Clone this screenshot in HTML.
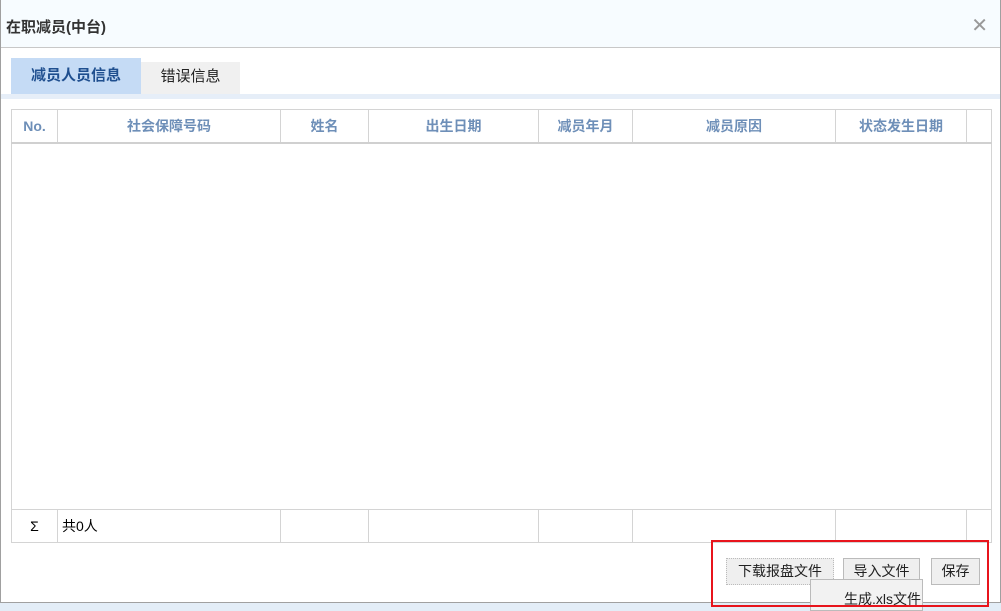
<!DOCTYPE html>
<html><head><meta charset="utf-8"><style>
*{margin:0;padding:0;box-sizing:border-box}
body{width:1001px;height:611px;background:#e3edf7;font-family:"Liberation Sans","Noto Sans CJK SC",sans-serif;position:relative;overflow:hidden}
.win{position:absolute;left:0;top:0;width:1001px;height:603px;background:#fff;border:1px solid #a0a0a0}
.hd{position:absolute;left:0;top:-1px;width:999px;height:48px;background:#f7fcff;border-bottom:1px solid #c8c8c8}
.hd b{position:absolute;left:5px;top:16px;font-size:15px;color:#333}
.x{position:absolute;right:12px;top:13px;font-size:20px;color:#999}
.tab{position:absolute;top:57px;height:36px;font-size:15px;line-height:36px;text-align:center}
.strip{position:absolute;left:0;top:93px;width:999px;height:5px;background:#e6eef8}
table{position:absolute;left:10px;top:108px;width:980px;border-collapse:collapse;table-layout:fixed}
td{border:1px solid #d4d4d4;font-size:14px}
.h td{height:33px;color:#6e8fb8;font-weight:bold;text-align:center;border-bottom:2px solid #d0d0d0}
.btn{position:absolute;top:557px;height:27px;background:#efefef;border:1px solid #bbb;font-size:14px;line-height:25px;text-align:center;color:#222}
</style></head><body>
<div class="win">
<div class="hd"><b>在职减员(中台)</b><span class="x">✕</span></div>
<div class="tab" style="left:10px;width:130px;background:#c5dbf5;color:#1f4f8f;font-weight:bold">减员人员信息</div>
<div class="tab" style="left:140px;width:99px;background:#f0f0f0;color:#222;top:61px;height:32px;line-height:30px">错误信息</div>
<div class="strip"></div>
<table>
<colgroup><col style="width:46px"><col style="width:223px"><col style="width:88px"><col style="width:170px"><col style="width:94px"><col style="width:203px"><col style="width:131px"><col style="width:25px"></colgroup>
<tr class="h"><td>No.</td><td>社会保障号码</td><td>姓名</td><td>出生日期</td><td>减员年月</td><td>减员原因</td><td>状态发生日期</td><td></td></tr>
<tr><td colspan="8" style="height:367px;border-top:none"></td></tr>
<tr><td style="height:33px;text-align:center">Σ</td><td style="padding-left:4px">共0人</td><td></td><td></td><td></td><td></td><td></td><td></td></tr>
</table>
<div class="btn" style="left:725px;width:108px;border-style:dotted">下载报盘文件</div>
<div class="btn" style="left:842px;width:77px">导入文件</div>
<div class="btn" style="left:930px;width:49px">保存</div>
<div style="position:absolute;left:809px;top:578px;width:113px;height:32px;background:#f2f2f2;border:1px solid #bbb;font-size:14px;padding:9px 0 0 33px;color:#222">生成.xls文件</div>
<div style="position:absolute;left:710px;top:539px;width:278px;height:67px;border:2px solid #e8141c"></div>
</div>
</body></html>
